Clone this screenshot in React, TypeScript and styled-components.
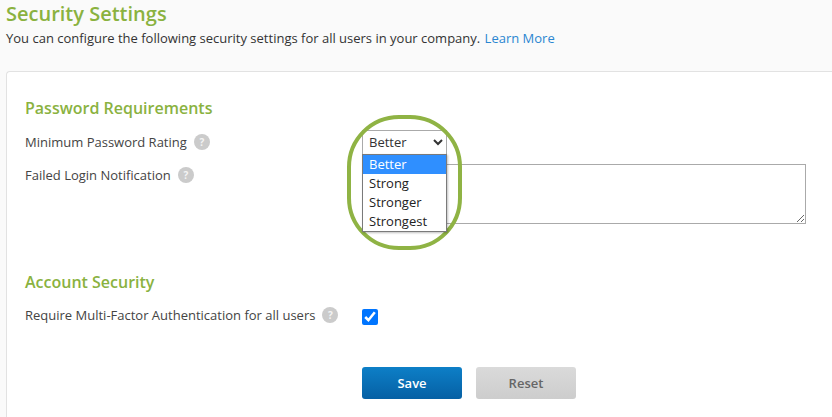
import styled, { createGlobalStyle } from 'styled-components'

const GlobalStyle = createGlobalStyle`
  html, body {
    margin: 0;
    padding: 0;
    height: 100%;
    overflow: hidden;
    background: #fafafa;
  }
  body {
    font-family: "Open Sans", "Liberation Sans", sans-serif;
    color: #333;
  }
`

const Page = styled.div`
  width: 832px;
  height: 417px;
  box-sizing: border-box;
  padding-left: 6px;
  overflow: hidden;
`

const Title = styled.h1`
  margin: 0;
  height: 30px;
  font-size: 20px;
  line-height: 28px;
  font-weight: 600;
  color: #8ab23f;
`

const Intro = styled.p`
  margin: 0;
  height: 41px;
  font-size: 13px;
  line-height: 17px;
  color: #333;
`

const LearnMore = styled.a`
  margin-left: 1px;
  color: #2a86d1;
  text-decoration: none;
`

const Card = styled.section`
  box-sizing: border-box;
  height: 360px;
  padding: 25px 0 0 18px;
  background: #fff;
  border: 1px solid #e2e2e2;
  border-right: none;
  border-top-left-radius: 4px;
`

const SectionTitle = styled.h2<{ $gap: number }>`
  margin: 0 0 ${p => p.$gap}px;
  font-size: 16px;
  line-height: 22px;
  font-weight: 600;
  color: #8ab23f;
`

const Row = styled.div<{ $height: number }>`
  display: grid;
  grid-template-columns: 337px 1fr;
  min-height: ${p => p.$height}px;
`

const Label = styled.label`
  display: flex;
  align-items: flex-start;
  gap: 7px;
  font-size: 13px;
  line-height: 24px;
  color: #444;
`

const Help = styled.span`
  flex: none;
  width: 16px;
  height: 16px;
  margin-top: 4px;
  border-radius: 50%;
  background: #cbcbcb;
  color: #f4f4f4;
  font-size: 10px;
  line-height: 16px;
  font-weight: 700;
  text-align: center;
`

const SelectWrap = styled.div`
  position: relative;
  width: 85px;
`

const RatingSelect = styled.select`
  display: block;
  width: 85px;
  height: 24px;
  box-sizing: border-box;
  padding: 0 0 2px 2px;
  font-family: inherit;
  font-size: 13px;
  color: #333;
  background: #fff;
  border: 1px solid #aaa;
  border-bottom: none;
  border-radius: 0;
  outline: none;
`

const Highlight = styled.div`
  position: absolute;
  left: -15px;
  top: -15px;
  width: 115px;
  height: 135px;
  box-sizing: border-box;
  border: 4px solid #8fb344;
  border-radius: 52px;
  pointer-events: none;
`

const OptionList = styled.ul`
  position: absolute;
  left: 0;
  top: 24px;
  z-index: 2;
  width: 85px;
  box-sizing: border-box;
  margin: 0;
  padding: 0;
  list-style: none;
  background: #fff;
  border: 1px solid #7a7a7a;
  box-shadow: 1px 1px 2px rgba(0, 0, 0, 0.25);
`

const OptionItem = styled.li<{ $active?: boolean }>`
  height: 19px;
  padding-left: 6px;
  font-size: 13px;
  line-height: 19px;
  color: ${p => (p.$active ? '#fff' : '#222')};
  background: ${p => (p.$active ? '#2f8fff' : 'transparent')};
`

const Notify = styled.textarea`
  display: block;
  width: 444px;
  height: 60px;
  box-sizing: border-box;
  margin-top: 1px;
  font-family: inherit;
  border: 1px solid #aaa;
  border-radius: 0;
  outline: none;
`

const Spacer = styled.div<{ $height: number }>`
  height: ${p => p.$height}px;
`

const Check = styled.input`
  display: block;
  width: 16px;
  height: 16px;
  margin: 6px 0 0;
  accent-color: #0075ff;
`

const Actions = styled.div`
  display: flex;
  gap: 14px;
  margin-left: 337px;
`

const ActionButton = styled.button<{ $primary?: boolean }>`
  width: 100px;
  height: 32px;
  padding: 0;
  border: none;
  border-radius: 3px;
  font-family: inherit;
  font-size: 13px;
  font-weight: 600;
  color: ${p => (p.$primary ? '#fff' : '#666')};
  background: ${p =>
    p.$primary
      ? 'linear-gradient(#0d7fc7, #0660a4)'
      : 'linear-gradient(#dadada, #cdcdcd)'};
`

const options = ['Better', 'Strong', 'Stronger', 'Strongest']

export default function App() {
  return (
    <Page>
      <GlobalStyle />
      <Title>Security Settings</Title>
      <Intro>
        You can configure the following security settings for all users in your company.{' '}
        <LearnMore href="#">Learn More</LearnMore>
      </Intro>
      <Card>
        <SectionTitle $gap={11}>Password Requirements</SectionTitle>
        <Row $height={33}>
          <Label>
            Minimum Password Rating <Help>?</Help>
          </Label>
          <SelectWrap>
            <RatingSelect defaultValue="Better">
              {options.map(o => (
                <option key={o}>{o}</option>
              ))}
            </RatingSelect>
            <OptionList>
              {options.map((o, i) => (
                <OptionItem key={o} $active={i === 0}>
                  {o}
                </OptionItem>
              ))}
            </OptionList>
            <Highlight />
          </SelectWrap>
        </Row>
        <Row $height={61}>
          <Label>
            Failed Login Notification <Help>?</Help>
          </Label>
          <Notify />
        </Row>
        <Spacer $height={47} />
        <SectionTitle $gap={10}>Account Security</SectionTitle>
        <Row $height={26}>
          <Label>
            Require Multi-Factor Authentication for all users <Help>?</Help>
          </Label>
          <Check type="checkbox" defaultChecked />
        </Row>
        <Spacer $height={38} />
        <Actions>
          <ActionButton $primary>Save</ActionButton>
          <ActionButton>Reset</ActionButton>
        </Actions>
      </Card>
    </Page>
  )
}
